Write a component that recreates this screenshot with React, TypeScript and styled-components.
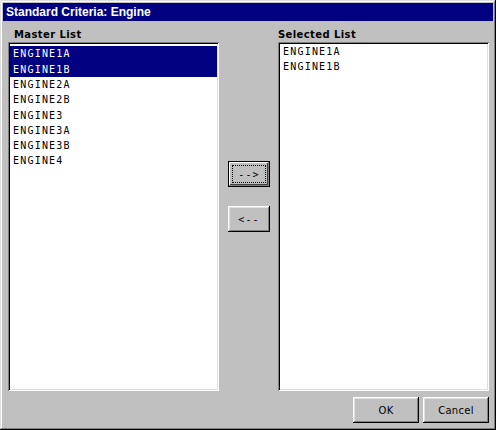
import React from 'react';
import styled, { createGlobalStyle } from 'styled-components';

const Global = createGlobalStyle`
  html, body { margin: 0; padding: 0; background: #c0c0c0; }
  * { box-sizing: border-box; }
`;

const Window = styled.div`
  width: 496px;
  height: 430px;
  background: #c0c0c0;
  padding: 3px;
  display: flex;
  flex-direction: column;
  box-shadow: inset -1px -1px #000, inset 1px 1px #dfdfdf,
    inset -2px -2px #808080, inset 2px 2px #fff;
`;

const TitleBar = styled.div`
  height: 18px;
  background: #000080;
  color: #fff;
  font-family: "Liberation Sans", Arial, sans-serif;
  font-weight: bold;
  font-size: 12px;
  line-height: 18px;
  padding-left: 3px;
  white-space: nowrap;
`;

const Body = styled.div`
  flex: 1;
  min-height: 0;
  display: grid;
  grid-template-columns: 211px 59px 211px;
  grid-template-rows: 14px 1fr auto;
  padding: 7px 4px 4px 5px;
`;

const Label = styled.div<{ $indent: number; $col: number }>`
  grid-row: 1;
  grid-column: ${(p) => p.$col};
  font-family: "DejaVu Sans", sans-serif;
  font-weight: bold;
  font-size: 10px;
  letter-spacing: 0.4px;
  line-height: 14px;
  padding-left: ${(p) => p.$indent}px;
  color: #000;
  white-space: nowrap;
`;

const ListBox = styled.div<{ $padTop: number; $col: number }>`
  grid-row: 2;
  grid-column: ${(p) => p.$col};
  background: #fff;
  padding: ${(p) => 2 + p.$padTop}px 2px 2px 2px;
  box-shadow: inset 1px 1px #808080, inset -1px -1px #fff,
    inset 2px 2px #000, inset -2px -2px #dfdfdf;
  overflow: hidden;
`;

const Item = styled.div<{ $selected?: boolean }>`
  height: 15.3px;
  line-height: 16.3px;
  padding-left: 3px;
  font-family: "DejaVu Sans Mono", monospace;
  font-size: 10px;
  letter-spacing: 1.2px;
  color: ${(p) => (p.$selected ? '#fff' : '#000')};
  background: ${(p) => (p.$selected ? '#000080' : 'transparent')};
  white-space: nowrap;
`;

const ButtonColumn = styled.div`
  grid-row: 2;
  grid-column: 2;
  display: flex;
  flex-direction: column;
  align-items: flex-start;
  padding: 119px 0 0 9px;
  gap: 19px;
`;

const Button = styled.button<{ $w: number; $default?: boolean; $mono?: boolean }>`
  position: relative;
  width: ${(p) => p.$w}px;
  height: 26px;
  margin: 0;
  padding: 0;
  border: none;
  background: #c0c0c0;
  color: #000;
  font-family: ${(p) => (p.$mono ? '"DejaVu Sans Mono", monospace' : '"DejaVu Sans", sans-serif')};
  font-size: 10px;
  letter-spacing: ${(p) => (p.$mono ? '1.2px' : '0.3px')};
  display: flex;
  align-items: center;
  justify-content: center;
  box-shadow: ${(p) =>
    p.$default
      ? 'inset 0 0 0 1px #000, inset -2px -2px #808080, inset 2px 2px #fff, inset -3px -3px #404040'
      : 'inset -1px -1px #000, inset 1px 1px #fff, inset -2px -2px #808080, inset 2px 2px #dfdfdf'};
  cursor: default;
`;

const FocusRing = styled.span`
  position: absolute;
  left: 4px;
  top: 4px;
  right: 4px;
  bottom: 4px;
  border: 1px dotted #000;
  pointer-events: none;
`;

const Footer = styled.div`
  grid-row: 3;
  grid-column: 1 / -1;
  display: flex;
  justify-content: flex-end;
  gap: 4px;
  margin-top: 6px;
`;

const master = ['ENGINE1A', 'ENGINE1B', 'ENGINE2A', 'ENGINE2B', 'ENGINE3', 'ENGINE3A', 'ENGINE3B', 'ENGINE4'];
const selectedSet = new Set(['ENGINE1A', 'ENGINE1B']);
const selectedList = ['ENGINE1A', 'ENGINE1B'];

export default function App() {
  return (
    <>
      <Global />
      <Window>
        <TitleBar>Standard Criteria: Engine</TitleBar>
        <Body>
          <Label $col={1} $indent={6}>Master List</Label>
          <Label $col={3} $indent={0}>Selected List</Label>
          <ListBox $col={1} $padTop={2.4}>
            {master.map((m) => (
              <Item key={m} $selected={selectedSet.has(m)}>{m}</Item>
            ))}
          </ListBox>
          <ButtonColumn>
            <Button $w={42} $default $mono>
              --&gt;
              <FocusRing />
            </Button>
            <Button $w={42} $mono>&lt;--</Button>
          </ButtonColumn>
          <ListBox $col={3} $padTop={0}>
            {selectedList.map((m) => (
              <Item key={m}>{m}</Item>
            ))}
          </ListBox>
          <Footer>
            <Button $w={66}>OK</Button>
            <Button $w={66}>Cancel</Button>
          </Footer>
        </Body>
      </Window>
    </>
  );
}
